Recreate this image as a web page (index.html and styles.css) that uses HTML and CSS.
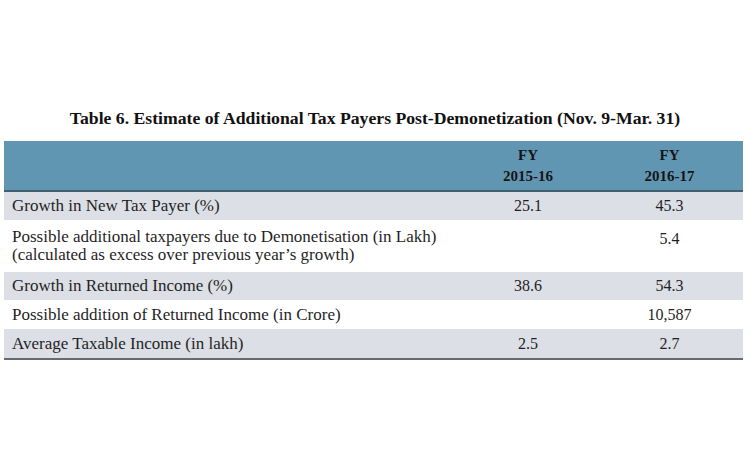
FILE: index.html
```html
<!DOCTYPE html>
<html>
<head>
<meta charset="utf-8">
<link rel="stylesheet" href="styles.css">
</head>
<body>
<div class="page">
  <h1 class="title">Table 6. Estimate of Additional Tax Payers Post-Demonetization (Nov. 9-Mar. 31)</h1>
  <table class="data">
    <colgroup>
      <col class="c1"><col class="c2"><col class="c3">
    </colgroup>
    <thead>
      <tr class="head">
        <th></th>
        <th class="num">FY<br>2015-16</th>
        <th class="num">FY<br>2016-17</th>
      </tr>
    </thead>
    <tbody>
      <tr class="shade r1">
        <td>Growth in New Tax Payer (%)</td>
        <td class="num">25.1</td>
        <td class="num">45.3</td>
      </tr>
      <tr class="r2">
        <td>Possible additional taxpayers due to Demonetisation (in Lakh)<br>(calculated as excess over previous year’s growth)</td>
        <td class="num"></td>
        <td class="num top">5.4</td>
      </tr>
      <tr class="shade r3">
        <td>Growth in Returned Income (%)</td>
        <td class="num">38.6</td>
        <td class="num">54.3</td>
      </tr>
      <tr class="r4">
        <td>Possible addition of Returned Income (in Crore)</td>
        <td class="num"></td>
        <td class="num">10,587</td>
      </tr>
      <tr class="shade r5">
        <td>Average Taxable Income (in lakh)</td>
        <td class="num">2.5</td>
        <td class="num">2.7</td>
      </tr>
    </tbody>
  </table>
</div>
</body>
</html>
```

FILE: styles.css
```css
html, body {
  margin: 0;
  padding: 0;
  background: #ffffff;
}
.page {
  width: 750px;
  height: 453px;
  padding-top: 107px;
  box-sizing: border-box;
  font-family: "Liberation Serif", "Times New Roman", serif;
  color: #1f1f1f;
}
.title {
  margin: 0;
  height: 34px;
  font-size: 17.7px;
  line-height: 22px;
  font-weight: bold;
  text-align: center;
  color: #111;
}
.data {
  margin-left: 4px;
  width: 739px;
  border-collapse: collapse;
  table-layout: fixed;
  font-size: 17px;
}
.c1 { width: 456px; }
.c2 { width: 136px; }
.c3 { width: 147px; }
.data td, .data th {
  padding: 0 0 0 8px;
  text-align: left;
  vertical-align: middle;
}
.data .num {
  text-align: center;
  padding: 0;
  font-size: 16px;
}
.head {
  background: #6196b3;
  height: 50px;
  border-bottom: 2px solid #41606f;
}
.head th {
  font-size: 14.5px;
  line-height: 21px;
  font-weight: bold;
  color: #151515;
  padding-top: 3px;
}
.head th.num { font-size: 15px; }
.shade { background: #dcdfe5; }
.r1 { height: 29px; }
.r2 { height: 52px; }
.r2 td { line-height: 18px; }
.r2 .top { vertical-align: top; padding-top: 10px; }
.r3 { height: 28px; }
.r4 { height: 29px; }
.r5 { height: 30px; border-bottom: 2px solid #6a6a6a; }
```
